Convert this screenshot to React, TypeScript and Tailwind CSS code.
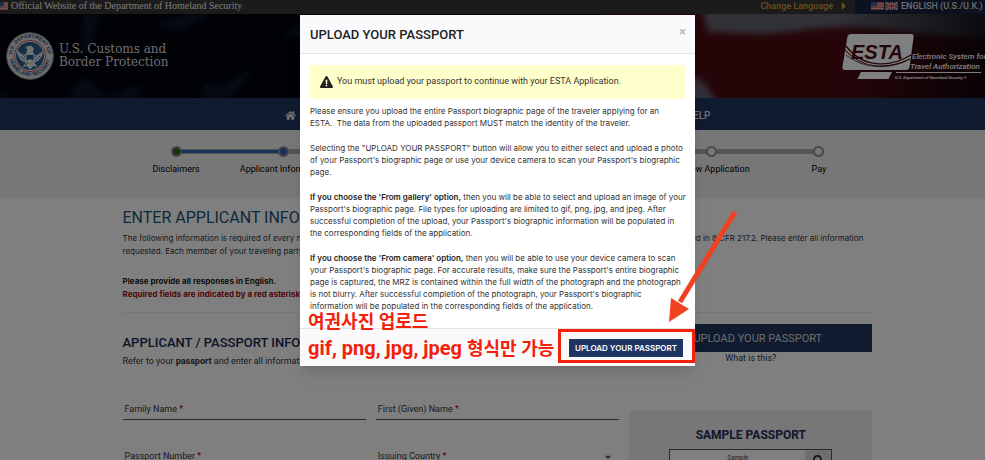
import React from 'react';
import { FaCamera, FaCaretDown, FaCaretRight, FaHome, FaSearch } from 'react-icons/fa';

const steps = [
  'Disclaimers',
  'Applicant Information',
  'Personal Information',
  'Travel Information',
  'Eligibility Questions',
  'Review Application',
  'Pay',
];

function UsFlag({ className }: { className: string }) {
  return (
    <svg viewBox="0 0 13 9" preserveAspectRatio="none" className={className} aria-hidden="true">
      <rect width="13" height="9" fill="#e8d0d0" />
      <path d="M0 .5h13M0 2.5h13M0 4.5h13M0 6.5h13M0 8.5h13" stroke="#c23a3f" />
      <rect width="6" height="5" fill="#3d5a94" />
    </svg>
  );
}

function UkFlag({ className }: { className: string }) {
  return (
    <svg viewBox="0 0 13 9" preserveAspectRatio="none" className={className} aria-hidden="true">
      <rect width="13" height="9" fill="#2d4482" />
      <path d="M0 0l13 9M13 0L0 9" stroke="#e4e4e4" strokeWidth="2" />
      <path d="M0 0l13 9M13 0L0 9" stroke="#c9353d" strokeWidth=".7" />
      <path d="M6.5 0v9M0 4.5h13" stroke="#e4e4e4" strokeWidth="3" />
      <path d="M6.5 0v9M0 4.5h13" stroke="#c9353d" strokeWidth="1.6" />
    </svg>
  );
}

function Seal() {
  return (
    <svg viewBox="0 0 48 48" className="size-12 shrink-0" role="img" aria-label="Department of Homeland Security seal">
      <defs>
        <path id="seal-top" d="M6.8 29A18 18 0 1 1 41.2 29" />
        <path id="seal-bottom" d="M3.4 26A20.8 20.8 0 0 0 44.6 26" />
      </defs>
      <circle cx="24" cy="24" r="23.3" fill="#d6d8da" stroke="#8f9296" strokeWidth="1" />
      <circle cx="24" cy="24" r="15.6" fill="#e9eaeb" stroke="#c0504a" strokeWidth="1" />
      <circle cx="24" cy="24" r="14" fill="#2a5f92" />
      <text fill="#1f4d7c" fontSize="5" fontWeight="700" fontFamily="Liberation Sans, sans-serif">
        <textPath href="#seal-top" startOffset="50%" textAnchor="middle">U.S. DEPARTMENT OF</textPath>
      </text>
      <text fill="#1f4d7c" fontSize="5" fontWeight="700" fontFamily="Liberation Sans, sans-serif">
        <textPath href="#seal-bottom" startOffset="50%" textAnchor="middle">HOMELAND SECURITY</textPath>
      </text>
      {/* eagle */}
      <path d="M10.6 18c1 7 4 11 9 12.500l-3 5 4-1.500 3.400 3.500 3.400-3.500 4 1.500-3-5c5-1.500 8-5.500 9-12.500-3 4-6 5-9 5l-1.500-3.500 1-3-3-3-4 1-2 1.500 2.500.8-1.500 5.700c-3.300 0-6.300-1-9.300-5z" fill="#dfe3e6" />
      <path d="M20.500 23h7v5l-3.500 3.500-3.500-3.500z" fill="#2a5f92" />
      <path d="M21 28.500l3-1.500 3 1.500-3 3z" fill="#eef0f0" />
      <path d="M14 24l5 4M34 24l-5 4M16 22l4 4M32 22l-4 4" stroke="#2a5f92" strokeWidth=".7" />
      <path d="M18 32l4-1.500-1.500 3z" fill="#7d9a4c" />
    </svg>
  );
}

function EstaLogo() {
  return (
    <svg viewBox="0 0 157 52" className="h-[52px] w-[157px] shrink-0" role="img" aria-label="ESTA Electronic System for Travel Authorization">
      <path d="M13 4h60q3 0 2.600 3l-4 30q-.4 3-3.600 3H7q-3 0-2.600-3l5-30Q10 4 13 4z" fill="#fff" />
      <path d="M23 42h31l-3.500 7h-31z" fill="#fff" />
      <text x="13" y="29" fill="#480d15" fontSize="20" fontWeight="700" fontStyle="italic" fontFamily="Liberation Sans, sans-serif">ESTA</text>
      <path d="M8 16c16 21 42 23 65 9" stroke="#480d15" strokeWidth="1.300" fill="none" />
      <path d="M7 20c17 19 42 20 65 9" stroke="#480d15" strokeWidth="1.100" fill="none" />
      <path d="M8 25c16 13 40 15 60 6" stroke="#480d15" strokeWidth=".8" fill="none" />
      <g fill="#fff" fontFamily="Roboto, sans-serif" fontStyle="italic">
        <text x="74" y="29" fontSize="8" fontWeight="500">Electronic System for</text>
        <text x="72" y="39" fontSize="8" fontWeight="500">Travel Authorization</text>
        <text x="57" y="49" fontSize="4" fontWeight="700">U.S. Department of Homeland Security ®</text>
      </g>
      <path d="M58 42.500h85" stroke="#fff" />
    </svg>
  );
}

function BannerArt() {
  return (
    <svg viewBox="0 0 995 84" preserveAspectRatio="none" className="absolute inset-0 h-full w-full" aria-hidden="true">
      <defs>
        <linearGradient id="fade" x1="0" x2="1">
          <stop offset="0.5" stopColor="#04040a" stopOpacity="0" />
          <stop offset="1" stopColor="#04040a" stopOpacity="0.850" />
        </linearGradient>
        <filter id="soft"><feGaussianBlur stdDeviation="3" /></filter>
      </defs>
      <rect width="995" height="84" fill="#03040d" />
      <g fill="#08182c" filter="url(#soft)">
        <path d="M84 0h18l-14 34-8 10z" />
        <path d="M152 10l40-10h20l-34 18z" />
        <path d="M282 22l22-18v20z" />
        <path d="M84 62l26 22H66z" />
        <path d="M200 84l6-16 12 6 38-22-26 32z" />
        <path d="M0 74l12 10H0z" />
        <path d="M100 84l44-14-8 14z" />
      </g>
      <rect x="600" width="395" height="84" fill="#4c0b13" />
      <g fill="#62646f" filter="url(#soft)">
        <path d="M702-6h300v32c-30-4-70-4-110-10-60-8-90 2-130 4l-54-2z" />
        <path d="M680 56l24 12 14 22h-38z" />
      </g>
      <rect x="680" width="315" height="84" fill="url(#fade)" />
    </svg>
  );
}

function StepBar() {
  return (
    <ol className="mx-auto grid w-[750px] grid-cols-7 pt-4">
      {steps.map((step, i) => (
        <li key={step} className="flex flex-col items-center gap-[6px] whitespace-nowrap text-[9px] leading-3 text-black">
          <div className="flex w-full items-center">
            <span className={`flex h-[5px] flex-1 items-center ${i > 0 ? 'bg-[#a8a8a8]' : ''}`}>
              {i === 1 && <span className="h-[3px] w-full bg-[#2f62b0]"></span>}
            </span>
            <span
              className={`-mx-px size-[11px] rounded-full border-2 border-[#8f8f8f] ${
                i === 0 ? 'bg-[#1d6b16]' : i === 1 ? 'bg-[#2f62b0]' : 'bg-[#eeeeee]'
              }`}
            ></span>
            <span className={`flex h-[5px] flex-1 items-center ${i < 6 ? 'bg-[#a8a8a8]' : ''}`}>
              {i === 0 && <span className="h-[3px] w-full bg-[#2f62b0]"></span>}
            </span>
          </div>
          <span>{step}</span>
        </li>
      ))}
    </ol>
  );
}

function Field({ id, label, select }: { id: string; label: string; select?: boolean }) {
  return (
    <div className="flex h-5 items-center gap-2 border-b border-[#555] px-[2px] text-[9px] text-[#333]">
      <label htmlFor={id} className="whitespace-nowrap">
        {label} <span className="text-[#b00000]">*</span>
      </label>
      {select ? (
        <>
          <select id={id} className="min-w-0 flex-1 appearance-none bg-transparent outline-none">
            <option></option>
          </select>
          <FaCaretDown className="mr-1 size-[10px] text-[#666]" />
        </>
      ) : (
        <input id={id} className="min-w-0 flex-1 bg-transparent outline-none" />
      )}
    </div>
  );
}

function Page() {
  return (
    <div>
      <div className="flex h-[14px] items-start justify-between bg-[#363636] text-[9px] leading-3 text-[#dcdcdc]">
        <div className="flex items-center gap-[3px]">
          <UsFlag className="h-2 w-2" />
          <span className="font-['Liberation_Serif',serif] text-[10px] text-[#f0f0f0]">Official Website of the Department of Homeland Security</span>
        </div>
        <div className="flex h-full">
          <button className="flex h-3 items-center gap-[5px] pr-[5px] font-medium text-[#d8a033]">
            Change Language <FaCaretRight className="size-3" />
          </button>
          <div className="flex h-full w-[140px] items-start bg-[#16233f] pl-4">
            <span className="flex h-3 items-center gap-px font-medium">
              <UsFlag className="h-2 w-[13px]" />
              <UkFlag className="mr-[2px] h-2 w-[13px]" />
              ENGLISH (U.S./U.K.)
            </span>
          </div>
        </div>
      </div>

      <header className="relative h-[84px]">
        <BannerArt />
        <div className="relative flex h-full items-center justify-between pl-[6px]">
          <div className="flex items-center gap-[5px] font-['DejaVu_Serif',serif] text-[12px] leading-[13px] text-[#dadada]">
            <Seal />
            <div>
              U.S. Customs and
              <br />
              Border Protection
            </div>
          </div>
          <EstaLogo />
        </div>
      </header>

      <nav className="h-8 bg-[#22365f] shadow-md">
        <div className="mx-auto flex h-full w-[426px] items-center justify-between pt-[2px] text-[10px] font-medium text-[#e2e2e2]">
          <a href="#home" className="flex items-center gap-1">
            <FaHome className="size-[11px]" /> HOME
          </a>
          <a href="#new">NEW APPLICATION</a>
          <a href="#status">CHECK ESTA STATUS</a>
          <a href="#help">HELP</a>
        </div>
      </nav>

      <div className="h-[68px] bg-[#eeeeee]">
        <StepBar />
      </div>

      <main className="mx-auto w-[750px] text-[9px] leading-[13px] text-[#333]">
        <h1 className="pt-[10px] text-[16px] leading-5 text-[#1a5276]">ENTER APPLICANT INFORMATION</h1>
        <p className="mt-1 whitespace-nowrap font-[Inter] text-[8px]">
          The following information is required of every nonimmigrant alien traveling under the Visa Waiver Program and is set forth in the applicable law contained in{' '}
          <a href="#cfr" className="text-[#1f3a5f]">8 CFR 217.2</a>. Please enter all information
          <br />
          requested. Each member of your traveling party must submit an individual application.
        </p>
        <p className="mt-[17px] whitespace-nowrap font-[Inter] text-[8px] font-bold text-[#222]">
          Please provide all responses in English.
          <br />
          <span className="text-[#a00c0c]">Required fields are indicated by a red asterisk *</span>
        </p>
        <hr className="mt-[11px] border-[#ececec]" />

        <div className="mt-[11px] grid grid-cols-3 gap-x-[10px]">
          <div className="col-span-2 pt-[11px]">
            <h2 className="text-[13px] font-medium leading-4 text-[#14284f]">APPLICANT / PASSPORT INFORMATION</h2>
            <p className="mt-1">
              Refer to your <b>passport</b> and enter all information as it appears.
            </p>
          </div>
          <div className="text-center">
            <button className="flex h-7 w-full items-center justify-center gap-1 bg-[#22365f] text-[11px] text-[#dcdcdc]">
              <FaCamera className="size-[10px]" /> UPLOAD YOUR PASSPORT
            </button>
            <a href="#what" className="text-[#1f3a5f]">What is this?</a>
          </div>
        </div>

        <div className="mt-[32px] grid grid-cols-3 gap-x-[10px]">
          <form className="col-span-2 grid grid-cols-2 content-start gap-x-[10px] gap-y-[27px]">
            <Field id="family" label="Family Name" />
            <Field id="first" label="First (Given) Name" />
            <Field id="number" label="Passport Number" />
            <Field id="country" label="Issuing Country" select />
          </form>
          <aside className="mt-[11px] h-[160px] bg-[#eeeeee] pt-4 text-center">
            <h3 className="text-[12px] font-bold leading-4 text-[#1c2f5c]">SAMPLE PASSPORT</h3>
            <div className="mx-auto mt-[6px] flex h-[110px] w-[163px] items-start border border-[#555] bg-white">
              <span className="flex-1 pt-px font-[Inter] text-[6px]">Sample</span>
              <button aria-label="Enlarge sample" className="flex h-5 w-[26px] items-center justify-center bg-[#dcdcdc] text-[#222]">
                <FaSearch className="size-[11px]" />
              </button>
            </div>
          </aside>
        </div>
      </main>
    </div>
  );
}

function UploadDialog() {
  return (
    <div role="dialog" aria-labelledby="upload-title" className="relative w-[395px] bg-white text-[#333] shadow-lg">
      <div className="flex h-[39px] items-center justify-between border-b border-[#e5e5e5] bg-[#fafafc] pl-[10px] pr-[9px]">
        <h2 id="upload-title" className="pt-[2px] text-[13px] font-medium text-[#222]">UPLOAD YOUR PASSPORT</h2>
        <button aria-label="Close" className="pb-1 text-[13px] font-medium leading-4 text-[#b5b5b5]">×</button>
      </div>

      <div className="px-[10px] pb-4 pt-[11px]">
        <div className="mb-[6px] flex h-[34px] items-center gap-1 bg-[#ffffcc] pl-[10px] text-[9px]">
          <svg viewBox="0 0 24 22" className="h-3 w-[13px]" aria-hidden="true">
            <path d="M12 0q1.200 0 1.800 1l10 18.500q.8 2.500-1.800 2.500H2q-2.600 0-1.800-2.500l10-18.500Q10.800 0 12 0z" fill="#222" />
            <path d="M10.300 7h3.400l-.5 7.500h-2.400zM10.500 16h3v3h-3z" fill="#ffffcc" />
          </svg>
          You must upload your passport to continue with your ESTA Application.
        </div>
        <div className="flex flex-col gap-[13px] whitespace-nowrap font-[Inter] text-[8px] leading-3">
          <p>
            Please ensure you upload the entire Passport biographic page of the traveler applying for an
            <br />
            ESTA.&nbsp; The data from the uploaded passport MUST match the identity of the traveler.
          </p>
          <p>
            Selecting the "UPLOAD YOUR PASSPORT" button will allow you to either select and upload a photo
            <br />
            of your Passport's biographic page or use your device camera to scan your Passport's biographic
            <br />
            page.
          </p>
          <p>
            <b className="font-semibold text-[#222]">If you choose the 'From gallery' option,</b> then you will be able to select and upload an image of your
            <br />
            Passport's biographic page. File types for uploading are limited to gif, png, jpg, and jpeg. After
            <br />
            successful completion of the upload, your Passport's biographic information will be populated in
            <br />
            the corresponding fields of the application.
          </p>
          <p>
            <b className="font-semibold text-[#222]">If you choose the 'From camera' option,</b> then you will be able to use your device camera to scan
            <br />
            your Passport's biographic page. For accurate results, make sure the Passport's entire biographic
            <br />
            page is captured, the MRZ is contained within the full width of the photograph and the photograph
            <br />
            is not blurry. After successful completion of the photograph, your Passport's biographic
            <br />
            information will be populated in the corresponding fields of the application.
          </p>
        </div>
      </div>

      <div className="flex h-[38px] items-center justify-end border-t border-[#e5e5e5] bg-[#fafafc] pr-3">
        <button className="h-[18px] w-[114px] whitespace-nowrap bg-[#1f3463] font-[Inter] text-[8px] font-semibold text-white">
          UPLOAD YOUR PASSPORT
        </button>
      </div>

      {/* Markup drawn over the dialog */}
      <div className="absolute bottom-1 left-2 whitespace-nowrap font-['Roboto','Noto_Sans_CJK_KR',sans-serif] font-bold leading-[26px] text-[#f3200c]">
        <p className="text-[18px]">여권사진 업로드</p>
        <p className="text-[20px]">
          gif, png, jpg, jpeg <span className="text-[18px]">형식만 가능</span>
        </p>
      </div>
      <div className="absolute bottom-[3px] right-0 h-[34px] w-[137px] border-3 border-[#f3200c]"></div>
      <svg viewBox="0 0 75 120" className="absolute left-[365px] top-[190px] h-[120px] w-[75px]" aria-hidden="true">
        <path d="M70 7L15 97" stroke="#f04123" strokeWidth="5" />
        <path d="M4 117l2-24 18 11z" fill="#f04123" />
      </svg>
    </div>
  );
}

export default function App() {
  return (
    <div className="relative h-screen overflow-hidden bg-white font-[Roboto,sans-serif]">
      <div className="-mr-[10px]">
        <Page />
      </div>
      <div className="absolute inset-y-0 left-0 -right-[10px] flex items-start justify-center bg-black/50 pt-[15px]">
        <UploadDialog />
      </div>
    </div>
  );
}
